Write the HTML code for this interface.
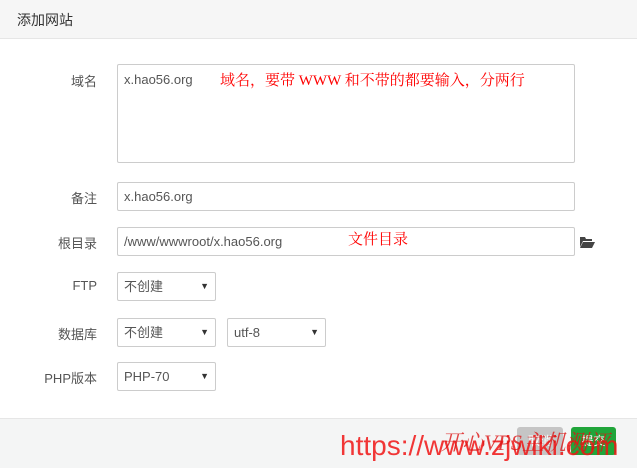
<!DOCTYPE html><html><head><meta charset="utf-8"><style>
*{box-sizing:border-box;margin:0;padding:0}
body{width:637px;height:468px;background:#fff;font-family:"Liberation Sans","Noto Sans CJK SC",sans-serif;font-size:13px;color:#555;position:relative;overflow:hidden}
.hd{position:absolute;left:0;top:0;width:637px;height:39px;background:#f6f6f6;border-bottom:1px solid #e6e6e6;padding:10px 17px;font-size:14px;color:#333}
.lb{position:absolute;width:97px;text-align:right;color:#555;font-size:13px}
.bx{position:absolute;border:1px solid #ccc;border-radius:2px;background:#fff;padding:0 6px;font-size:13px;color:#555;line-height:27px}
.sel:after{content:"▼";position:absolute;right:6px;top:0;font-size:9px;color:#333}
.red{position:absolute;color:#f00;font-family:"Liberation Serif","Noto Serif CJK SC",serif;font-size:15px}
.ft{position:absolute;left:0;top:418px;width:637px;height:50px;background:#f4f5f5;border-top:1px solid #e6e6e6}
.btn{position:absolute;top:427px;height:28px;border-radius:3px;color:#fff;font-size:12px;text-align:center;line-height:28px}
</style></head><body>
<div class="hd">添加网站</div>
<div class="lb" style="top:71px">域名</div>
<div class="bx" style="left:117px;top:64px;width:458px;height:99px;line-height:16px;padding-top:7px">x.hao56.org</div>
<div class="red" style="left:220px;top:69px">域名，要带 WWW 和不带的都要输入，分两行</div>
<div class="lb" style="top:188px">备注</div>
<div class="bx" style="left:117px;top:182px;width:458px;height:29px">x.hao56.org</div>
<div class="lb" style="top:233px">根目录</div>
<div class="bx" style="left:117px;top:227px;width:458px;height:29px">/www/wwwroot/x.hao56.org</div>
<div class="red" style="left:348px;top:228px">文件目录</div>
<svg style="position:absolute;left:579px;top:236px" width="16" height="12" viewBox="0 0 16 12"><path d="M1 1h5l1 2h6v2H4L1 11z" fill="#444"/><path d="M4 6h12l-3 6H1z" fill="#444"/></svg>
<div class="lb" style="top:278px">FTP</div>
<div class="bx sel" style="left:117px;top:272px;width:99px;height:29px">不创建</div>
<div class="lb" style="top:324px">数据库</div>
<div class="bx sel" style="left:117px;top:318px;width:99px;height:29px">不创建</div>
<div class="bx sel" style="left:227px;top:318px;width:99px;height:29px">utf-8</div>
<div class="lb" style="top:368px">PHP版本</div>
<div class="bx sel" style="left:117px;top:362px;width:99px;height:29px">PHP-70</div>
<div class="ft"></div>
<div class="btn" style="left:517px;width:46px;background:#c5c5c5">取消</div>
<div class="btn" style="left:571px;width:45px;background:#20a53a">提交</div>
<div style="position:absolute;left:340px;top:430px;color:rgba(240,20,20,.85);font-size:28px;font-family:'Liberation Sans',sans-serif;white-space:nowrap">https://www.zjwiki.com</div>
<div style="position:absolute;left:440px;top:426px;color:rgba(220,20,20,.8);font-size:22px;font-style:italic;font-family:'Liberation Serif','Noto Serif CJK SC',serif;white-space:nowrap">开心VPS主机测评</div>
</body></html>
